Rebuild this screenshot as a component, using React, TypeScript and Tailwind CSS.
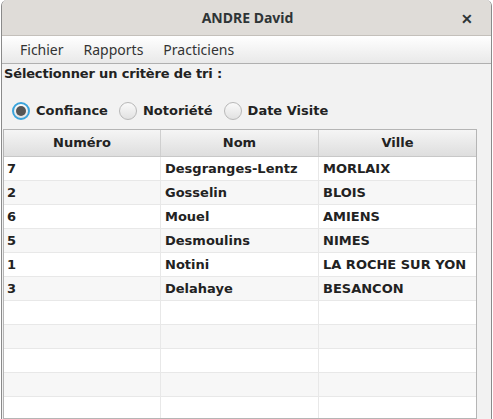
import React, { useState } from 'react';

const rows = [
    { num: '7', nom: 'Desgranges-Lentz', ville: 'MORLAIX' },
    { num: '2', nom: 'Gosselin', ville: 'BLOIS' },
    { num: '6', nom: 'Mouel', ville: 'AMIENS' },
    { num: '5', nom: 'Desmoulins', ville: 'NIMES' },
    { num: '1', nom: 'Notini', ville: 'LA ROCHE SUR YON' },
    { num: '3', nom: 'Delahaye', ville: 'BESANCON' },
    { num: '', nom: '', ville: '' },
    { num: '', nom: '', ville: '' },
    { num: '', nom: '', ville: '' },
    { num: '', nom: '', ville: '' },
    { num: '', nom: '', ville: '' },
];

const criteres = ['Confiance', 'Notoriété', 'Date Visite'];

const Radio: React.FC<{ label: string; checked: boolean; onClick: () => void }> = ({ label, checked, onClick }) => (
    <button onClick={onClick} className="flex items-center gap-[6px] h-[20px]">
        {checked ? (
            <span className="w-[18px] h-[18px] rounded-full border-[2px] border-[#3ba4dc] bg-gradient-to-b from-[#fafafa] to-[#e2e2e2] flex items-center justify-center">
                <span className="w-[10px] h-[10px] rounded-full bg-[#555]" />
            </span>
        ) : (
            <span className="w-[18px] h-[18px] rounded-full border border-[#b8b8b8] bg-gradient-to-b from-[#fafafa] to-[#e2e2e2]" />
        )}
        <span className="font-bold text-[13px] text-[#222]">{label}</span>
    </button>
);

export default function App() {
    const [critere, setCritere] = useState('Confiance');

    return (
        <div className="w-[493px] h-[419px] bg-white overflow-hidden" style={{ fontFamily: '"DejaVu Sans", sans-serif' }}>
            <div className="w-[491px] h-[419px] ml-[1px] flex flex-col border-x border-[#8a8a8a] rounded-t-[6px] overflow-hidden bg-[#f2f2f2]">
                {/* title bar */}
                <div className="h-[36px] shrink-0 bg-[#dfdcd8] border-b border-[#c4c0bb] flex items-center relative" style={{ fontFamily: '"Noto Sans", sans-serif' }}>
                    <div className="flex-1 text-center font-bold text-[14px] text-[#2e3436] pl-[2px]">ANDRE David</div>
                    <span className="absolute right-[18px] top-[8px] text-[14px] font-bold text-[#2e3436]">✕</span>
                </div>

                {/* menu */}
                <div className="h-[28px] shrink-0 bg-gradient-to-b from-white to-[#e9e9e9] border-b border-[#b0b0b0] flex items-center gap-[20px] pl-[18px] text-[14px] text-[#333]" style={{ fontFamily: '"Noto Sans", sans-serif' }}>
                    <span>Fichier</span>
                    <span>Rapports</span>
                    <span>Practiciens</span>
                </div>

                <div className="pl-[2px] pt-[1px] font-bold text-[13px] tracking-[-0.15px] text-[#222] leading-[18px]">Sélectionner un critère de tri :</div>

                <div className="flex items-center gap-[11px] pl-[10px] mt-[18px]">
                    {criteres.map(c => (
                        <Radio key={c} label={c} checked={critere === c} onClick={() => setCritere(c)} />
                    ))}
                </div>

                {/* table */}
                <div className="mt-[8px] ml-[1px] w-[474px] flex-1 border border-[#b5b5b5] bg-white overflow-hidden">
                    <div className="grid grid-cols-[157px_158px_157px] h-[27px] bg-gradient-to-b from-[#f5f5f5] to-[#dedede] border-b border-[#c8c8c8]">
                        {['Numéro', 'Nom', 'Ville'].map((h, i) => (
                            <div key={h} className={`flex items-center justify-center font-bold text-[13px] text-[#222] ${i < 2 ? 'border-r border-[#cfcfcf]' : ''}`}>{h}</div>
                        ))}
                    </div>
                    {rows.map((r, i) => (
                        <div key={i} className={`grid grid-cols-[157px_158px_157px] h-[24px] border-b border-[#e8e8e8] ${i % 2 === 0 ? 'bg-white' : 'bg-[#f7f7f7]'}`}>
                            <div className="border-r border-[#e8e8e8] pl-[3px] flex items-center font-bold text-[13px] text-[#222]">{r.num}</div>
                            <div className="border-r border-[#e8e8e8] pl-[4px] flex items-center font-bold text-[13px] text-[#222]">{r.nom}</div>
                            <div className="pl-[4px] flex items-center font-bold text-[13px] text-[#222]">{r.ville}</div>
                        </div>
                    ))}
                </div>
            </div>
        </div>
    );
}
